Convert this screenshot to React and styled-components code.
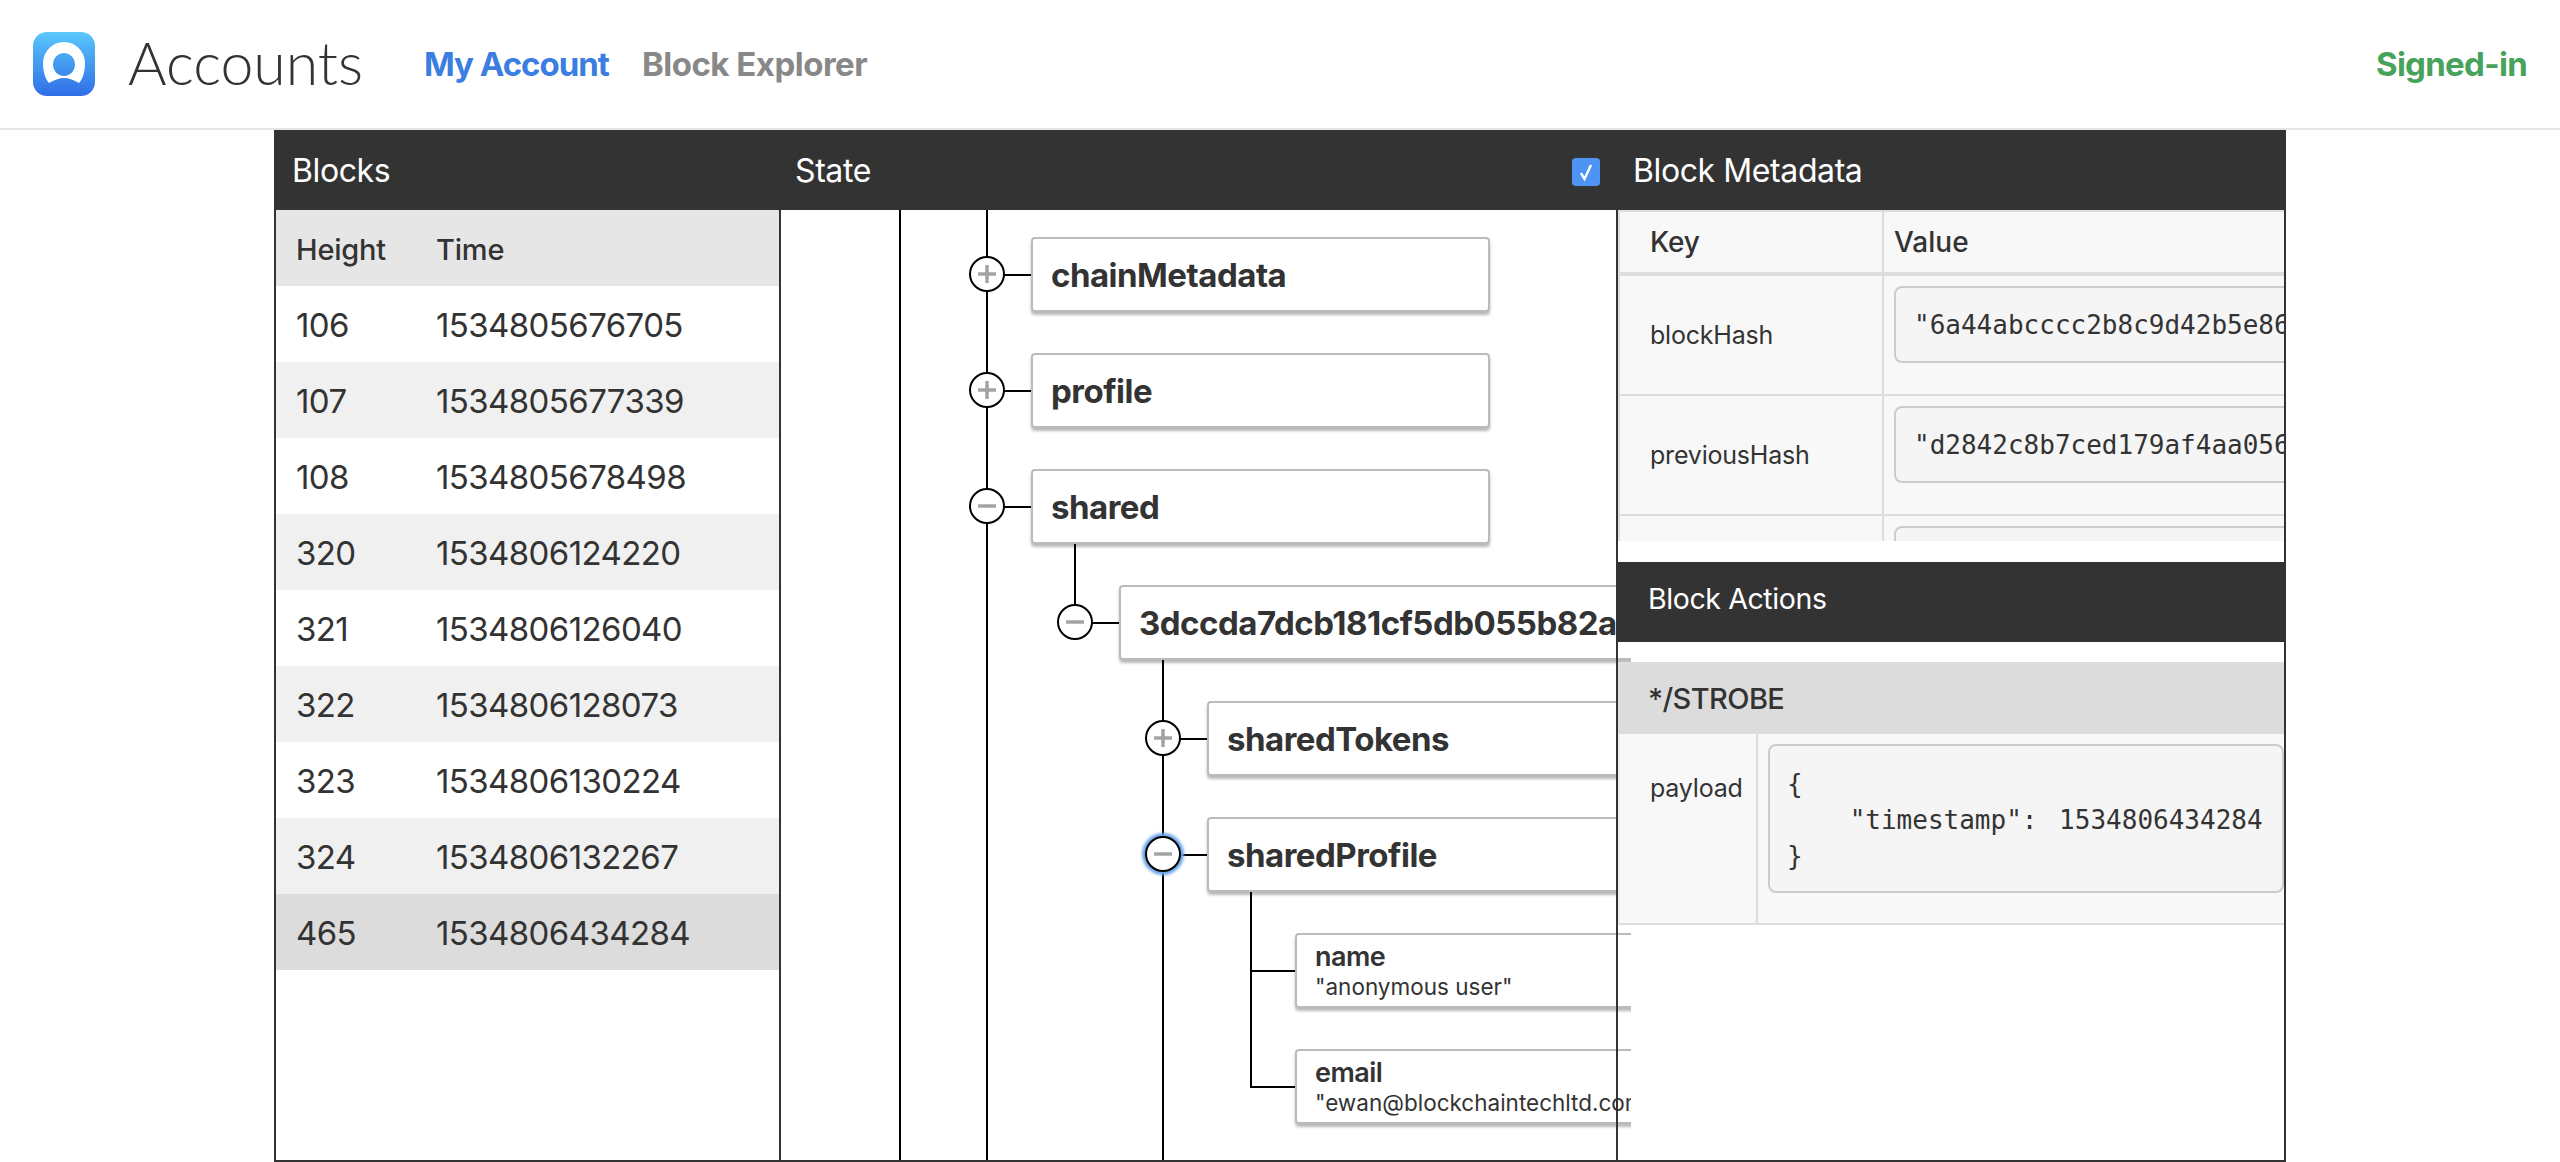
import React from "react";
import styled, { createGlobalStyle } from "styled-components";

const Global = createGlobalStyle`
  html, body { margin: 0; padding: 0; background: #fff; }
  body { font-family: Inter, "Noto Sans", sans-serif; color: #333; overflow: hidden; }
`;
const Page = styled.div`width: 2560px; height: 1162px; display: flex; flex-direction: column;`;
const TopBar = styled.header`
  height: 128px; flex: none; border-bottom: 2px solid #e6e6e6;
  display: flex; align-items: center; padding: 0 33px;
`;
const Logo = styled.svg`width: 62px; height: 64px; flex: none;`;
const Brand = styled.div`
  font-family: Lato, sans-serif; font-weight: 300; font-size: 59px; line-height: 1;
  color: #333; margin: -3px 0 0 33px; width: 296px; flex: none;
`;
const NavLink = styled.a`
  font-size: 33px; font-weight: 700; letter-spacing: ${p => (p.$active ? "-1px" : "-0.5px")};
  color: ${p => (p.$active ? "#3b7de0" : "#888")}; margin-right: 33px;
`;
const Status = styled.div`
  margin-left: auto; font-size: 33px; font-weight: 700; letter-spacing: -0.7px; color: #47a25b;
`;
const Frame = styled.main`
  margin-left: 274px; width: 2012px; height: 1032px; box-sizing: border-box;
  border: solid #333; border-width: 0 2px 2px; display: grid;
  grid-template-columns: 505px 835px 668px; position: relative; overflow: hidden;
`;
const Title = styled.div`
  height: 80px; flex: none; box-sizing: border-box; background: #333; color: #fff;
  font-size: ${p => p.$size || 32}px; font-weight: 400; letter-spacing: -0.4px;
  display: flex; align-items: center; justify-content: ${p => p.$between ? "space-between" : "flex-start"};
  padding: 0 ${p => p.$pr || 0}px ${p => p.$pb || 0}px ${p => p.$pl}px;
`;
const BlocksPanel = styled.section`
  border-right: 2px solid #333; display: flex; flex-direction: column; min-width: 0;
`;
const BlockRow = styled.div`
  height: 76px; flex: none; display: flex; align-items: center; padding: 2px 0 0 20px; box-sizing: border-box;
  font-weight: ${p => p.$head ? 500 : 400}; letter-spacing: ${p => p.$head ? "-0.2px" : "-0.6px"};
  background: ${p => p.$bg};
  font-size: ${p => p.$head ? "29px" : "33px"};
`;
const Cell = styled.span`width: ${p => p.$w}px; flex: none;`;
const StatePanel = styled.section`
  display: flex; flex-direction: column; width: 850px; overflow: hidden; min-width: 0;
`;
const Tree = styled.div`flex: 1; overflow: hidden; display: flex;`;
const Rail = styled.div`
  margin-left: ${p => p.$ml}px; border-left: 2px solid #000; flex: 1; min-width: 0;
`;
const Level = styled.div`
  margin-left: 86px; border-left: 2px solid transparent;
  ${p => p.$rail ? "border-left-color: #000; padding: 14px 0 60px; margin-top: -14px;" : ""}
`;
const Row = styled.div`
  position: relative; padding: 27px 0 14px 43px; display: flex;
  ${p => p.$stem ? `
    &::before { content: ""; position: absolute; left: -2px; top: -52px; height: 118px; width: 2px; background: #000; }
  ` : ""}
`;
const Connector = styled.span`
  position: absolute; left: 0; top: 64px; width: 45px; height: 2px; background: #000;
`;
const Toggle = styled.button`
  position: absolute; left: -19px; top: 46px; width: 36px; height: 36px; padding: 0; z-index: 1;
  border: 2px solid #000; border-radius: 50%; background: #fff; color: #a3a3a3;
  display: flex; align-items: center; justify-content: center;
  ${p => p.$focus ? "box-shadow: 0 0 3px 3px #6aa5ea;" : ""}
`;
const Card = styled.div`
  box-sizing: border-box; width: ${p => p.$w || 459}px; height: 75px; flex: none; background: #fff;
  border: 2px solid #bbb; border-radius: 4px; box-shadow: 0 3px 3px rgba(0,0,0,.28);
  padding: 0 18px; display: flex; flex-direction: column; justify-content: center;
  white-space: nowrap; position: relative; z-index: 1;
`;
const CardName = styled.div`
  font-size: ${p => p.$small ? 27 : 33}px; font-weight: ${p => p.$small ? 600 : 700};
  letter-spacing: -0.5px; line-height: ${p => p.$small ? 32 : 38}px; color: #333;
`;
const CardValue = styled.div`font-size: 22.5px; line-height: 28px; color: #333;`;
const Side = styled.aside`
  position: relative; z-index: 2; border-left: 2px solid #333;
  display: flex; flex-direction: column; min-width: 0; overflow: hidden; width: 668px; box-sizing: border-box;
`;
const Check = styled.span`
  width: 28px; height: 28px; border-radius: 4px; background: #4d94f5; color: #fff;
  display: flex; align-items: center; justify-content: center; margin-top: 4px;
`;
const MetaWindow = styled.div`height: 331px; flex: none; overflow: hidden; background: #f8f8f8; border-left: 2px solid #ddd;`;
const KV = styled.div`
  display: grid; grid-template-columns: ${p => p.$key}px 1fr;
  border-bottom: ${p => p.$bb}px solid #ddd; border-top: ${p => p.$bt || 0}px solid #ddd;
  background: #f8f8f8;
`;
const KeyCell = styled.div`
  border-right: 2px solid #ddd; font-size: ${p => p.$head ? 28 : 25}px; font-weight: ${p => p.$head ? 500 : 400};
  padding: ${p => p.$top}px 0 0 30px; height: ${p => p.$h}px; box-sizing: border-box; line-height: 30px; letter-spacing: -0.2px;
`;
const ValCell = styled.div`
  padding: ${p => p.$pad}; font-size: 28px; font-weight: 500; line-height: 30px; min-width: 0; overflow: hidden;
`;
const CodeBox = styled.pre`
  margin: 0; box-sizing: border-box; height: ${p => p.$h}px; width: ${p => p.$w || "800px"};
  border: 2px solid #ccc; border-radius: 8px; background: #f5f5f5; color: #333;
  font: 26px/36px "DejaVu Sans Mono", monospace; padding: ${p => p.$pad};
`;
const CodeLine = styled.span`word-spacing: 6px;`;
const Spacer = styled.div`height: ${p => p.$h}px; flex: none;`;
const ActionName = styled.div`
  height: 72px; background: #dcdcdc; display: flex; align-items: center; padding-left: 30px;
  font-size: 29px; font-weight: 500; flex: none; letter-spacing: -0.6px;
`;
const ActionRow = styled.div`
  display: grid; grid-template-columns: 138px 1fr; border-bottom: 2px solid #ddd; background: #f8f8f8;
  border-left: 2px solid #eee; height: 191px; box-sizing: border-box; flex: none;
`;
const Plus = ({ minus }) => (
  <svg width="20" height="20" viewBox="0 0 20 20" fill="none" stroke="currentColor" strokeWidth="3.5">
    <path d="M1 10h18" />
    {!minus && <path d="M10 1v18" />}
  </svg>
);
const Node = ({ name, minus, focus, w, stem, children }) => (
  <>
    <Row $stem={stem}>
      <Connector />
      <Toggle $focus={focus}><Plus minus={minus} /></Toggle>
      <Card $w={w}><CardName>{name}</CardName></Card>
    </Row>
    {children}
  </>
);
const Leaf = ({ name, value }) => (
  <Row $stem>
    <Connector />
    <Card $w={458}>
      <CardName $small>{name}</CardName>
      <CardValue>{value}</CardValue>
    </Card>
  </Row>
);
const blocks = [
  ["106", "1534805676705", "#fff"], ["107", "1534805677339", "#f0f0f0"],
  ["108", "1534805678498", "#fff"], ["320", "1534806124220", "#f0f0f0"],
  ["321", "1534806126040", "#fff"], ["322", "1534806128073", "#f0f0f0"],
  ["323", "1534806130224", "#fff"], ["324", "1534806132267", "#f0f0f0"],
  ["465", "1534806434284", "#dcdcdc"],
];
const meta = [
  ["blockHash", '"6a44abcccc2b8c9d42b5e86'],
  ["previousHash", '"d2842c8b7ced179af4aa056'],
  ["", ""],
];
export default function App() {
  return (
    <Page>
      <Global />
      <TopBar>
        <Logo viewBox="0 0 62 64">
          <defs>
            <linearGradient id="lg" x1="0" y1="0" x2="0" y2="1">
              <stop offset="0" stopColor="#5ac8fb" />
              <stop offset="1" stopColor="#2f6de8" />
            </linearGradient>
          </defs>
          <rect width="62" height="64" rx="14" fill="url(#lg)" />
          <path fillRule="evenodd" fill="#fff" d="M16 51C12 47 10 39 10 31A21 21 0 0 1 52 31C52 39 50 47 46 51C41 48 36 46 31 46C26 46 21 48 16 51ZM31 21C25 21 20 26 20 32.500S25 44 31 44S42 39 42 32.500S37 21 31 21Z" />
        </Logo>
        <Brand>Accounts</Brand>
        <NavLink $active>My Account</NavLink>
        <NavLink>Block Explorer</NavLink>
        <Status>Signed-in</Status>
      </TopBar>
      <Frame>
        <BlocksPanel>
          <Title $pl={16}>Blocks</Title>
          <BlockRow $head $bg="#e6e6e6"><Cell $w={140}>Height</Cell><Cell>Time</Cell></BlockRow>
          {blocks.map(b => (
            <BlockRow key={b[0]} $bg={b[2]}><Cell $w={140}>{b[0]}</Cell><Cell>{b[1]}</Cell></BlockRow>
          ))}
        </BlocksPanel>
        <StatePanel>
          <Title $pl={14} $pr={31} $between>
            State
            <Check>
              <svg width="22" height="22" viewBox="0 0 22 22" fill="none" stroke="currentColor" strokeWidth="2.4">
                <path d="M6 12l3.500 6L16 4" />
              </svg>
            </Check>
          </Title>
          <Tree>
            <Rail $ml={118}>
              <Rail $ml={85}>
                <Node name="chainMetadata" />
                <Node name="profile" />
                <Node name="shared" minus>
                  <Level>
                    <Node name="3dccda7dcb181cf5db055b82a" minus w={700} stem />
                    <Level $rail>
                      <Node name="sharedTokens" />
                      <Node name="sharedProfile" minus focus>
                        <Level>
                          <Leaf name="name" value={'"anonymous user"'} />
                          <Leaf name="email" value={'"ewan@blockchaintechltd.com"'} />
                        </Level>
                      </Node>
                    </Level>
                  </Level>
                </Node>
              </Rail>
            </Rail>
          </Tree>
        </StatePanel>
        <Side>
          <Title $pl={15}>Block Metadata</Title>
          <MetaWindow>
            <KV $key={264} $bb={4} $bt={2}>
              <KeyCell $head $top={15} $h={60}>Key</KeyCell>
              <ValCell $pad="15px 0 0 10px">Value</ValCell>
            </KV>
            {meta.map(m => (
              <KV key={m[0]} $key={264} $bb={2}>
                <KeyCell $top={44} $h={118}>{m[0]}</KeyCell>
                <ValCell $pad="10px 0 0 10px"><CodeBox $h={77} $pad="19px 18px">{m[1]}</CodeBox></ValCell>
              </KV>
            ))}
          </MetaWindow>
          <Spacer $h={21} />
          <Title $pl={30} $size={28.5} $pb={8}>Block Actions</Title>
          <Spacer $h={20} />
          <ActionName>*/STROBE</ActionName>
          <ActionRow>
            <KeyCell $top={39} $h={189}>payload</KeyCell>
            <ValCell $pad="10px 0 0 10px">
              <CodeBox $h={149} $w="516px" $pad="20px 17px">{"{\n    "}<CodeLine>{'"timestamp": 1534806434284'}</CodeLine>{"\n}"}</CodeBox>
            </ValCell>
          </ActionRow>
        </Side>
      </Frame>
    </Page>
  );
}
